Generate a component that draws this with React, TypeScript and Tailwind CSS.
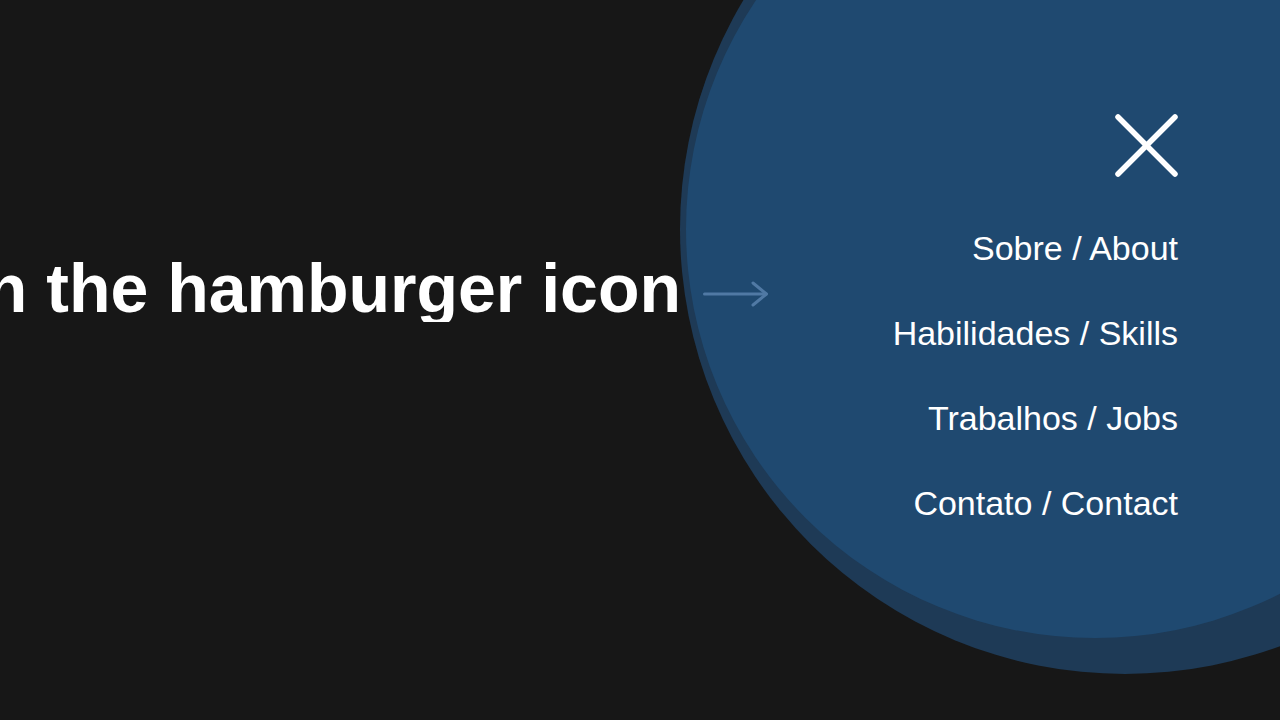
import React from 'react';

const links = ['Sobre / About', 'Habilidades / Skills', 'Trabalhos / Jobs', 'Contato / Contact'];

// Thin pointer that sits after the heading and leads into the open menu
function PointerArrow() {
  return (
    <svg
      width="66"
      height="26"
      viewBox="0 0 66 26"
      fill="none"
      stroke="#5079a4"
      strokeWidth="3"
      strokeLinecap="round"
      strokeLinejoin="round"
      className="ml-[22px] mt-[12px] shrink-0"
    >
      <line x1="1.5" y1="13" x2="63" y2="13" />
      <polyline points="50,2 63.5,13 50,24" />
    </svg>
  );
}

function CloseIcon() {
  return (
    <svg width="64" height="64" viewBox="0 0 64 64" fill="none" stroke="#ffffff" strokeWidth="5.5" strokeLinecap="round">
      <line x1="4" y1="4" x2="61" y2="61" />
      <line x1="61" y1="4" x2="4" y2="61" />
    </svg>
  );
}

export default function App() {
  return (
    <div className="relative h-screen w-full overflow-hidden bg-[#171717] font-['Liberation_Sans',Arial,sans-serif]">
      {/* circular menu backdrop: darker rim behind, main disc on top */}
      <div aria-hidden className="absolute left-[680px] top-[-216px] h-[890px] w-[890px] rounded-full bg-[#1e3a56]" />
      <div aria-hidden className="absolute left-[686px] top-[-180px] h-[818px] w-[818px] rounded-full bg-[#1f4970]" />

      <main className="relative flex items-center pt-[254px]">
        <div className="flex w-[681px] shrink-0 justify-end overflow-hidden">
          <h1 className="whitespace-nowrap text-[68px] font-bold leading-none text-white">Click on the hamburger icon</h1>
        </div>
        <PointerArrow />
      </main>

      <aside className="absolute right-0 top-0 flex flex-col items-end pr-[102px] pt-[113px]">
        <button type="button" aria-label="Fechar menu" className="h-16 w-16">
          <CloseIcon />
        </button>
        <nav className="mt-[29px] flex flex-col items-end">
          {links.map((label) => (
            <a key={label} href="#" className="text-[34px] leading-[85px] text-white whitespace-nowrap">
              {label}
            </a>
          ))}
        </nav>
      </aside>
    </div>
  );
}
